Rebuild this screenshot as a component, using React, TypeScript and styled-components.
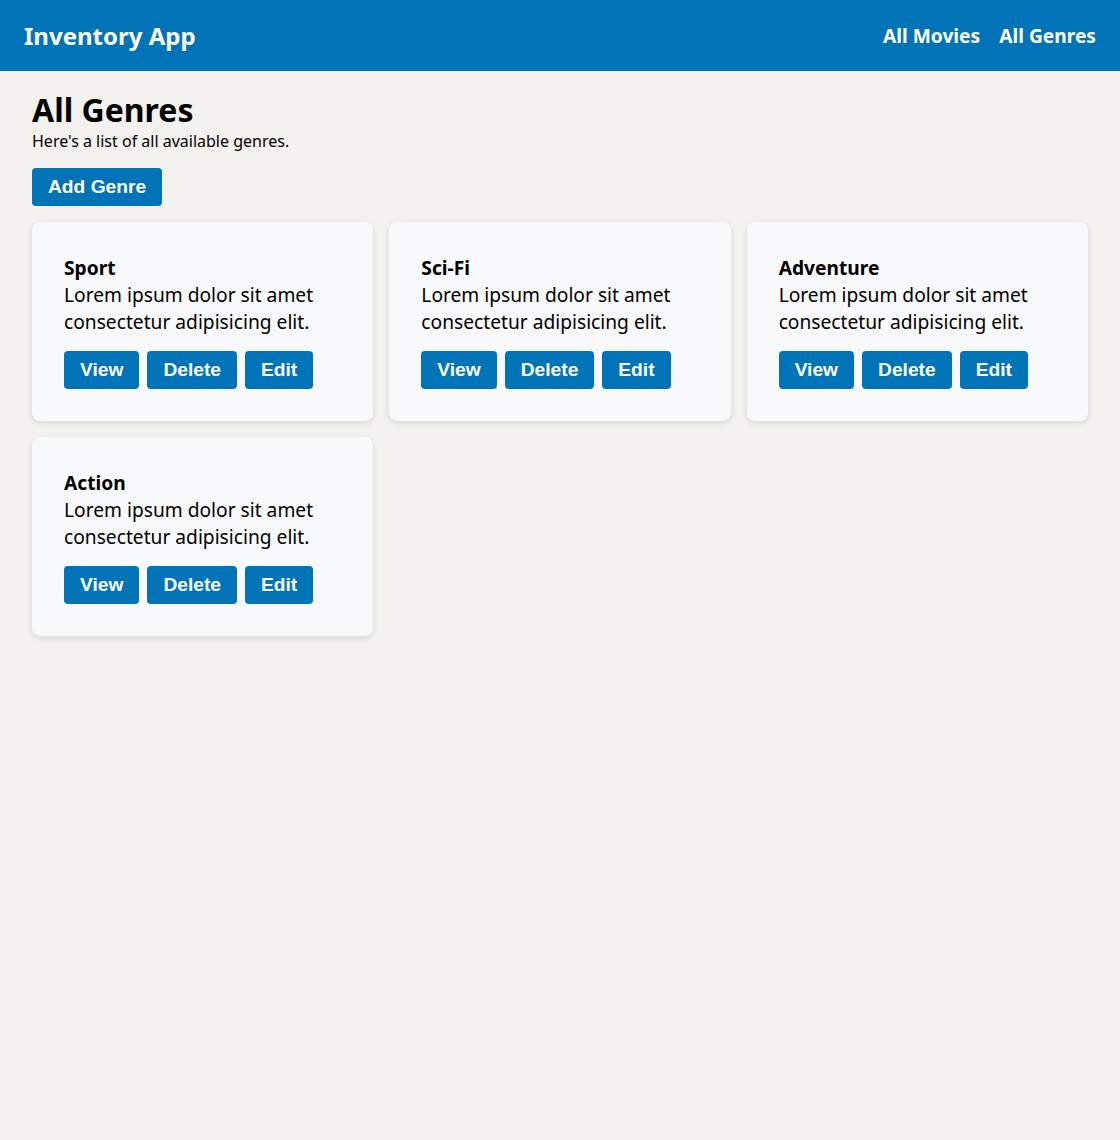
import styled, { createGlobalStyle } from 'styled-components'

const GlobalStyle = createGlobalStyle`
  html, body {
    margin: 0;
    padding: 0;
    background-color: #f4f2ef;
    font-family: "Noto Sans", sans-serif;
    color: #000000;
  }
  * {
    box-sizing: border-box;
  }
`

const Header = styled.header`
  height: 71px;
  padding: 0 24px;
  background-color: #0074b7;
  color: #ffffff;
  display: flex;
  align-items: center;
  justify-content: space-between;
`

const Brand = styled.h2`
  margin: 0;
  font-size: 24px;
  font-weight: 700;
`

const Nav = styled.nav`
  display: flex;
  gap: 19px;

  & a {
    color: #ffffff;
    text-decoration: none;
    font-size: 19.2px;
    font-weight: 700;
  }
`

const Main = styled.main`
  padding: 20px 32px 32px;
`

const Title = styled.h1`
  margin: 0;
  font-size: 32px;
  line-height: 38px;
  font-weight: 700;
`

const Subtitle = styled.p`
  margin: 0 0 15px;
  font-size: 16px;
  line-height: 24px;
`

const Button = styled.button`
  height: 38px;
  padding: 0 16px;
  border: none;
  border-radius: 4px;
  background-color: #0074b7;
  color: #ffffff;
  font-family: "Liberation Sans", Arial, sans-serif;
  font-size: 19.2px;
  font-weight: 700;
  cursor: pointer;
`

const Grid = styled.div`
  margin-top: 16px;
  display: grid;
  grid-template-columns: repeat(3, 1fr);
  gap: 16px;
`

const Card = styled.div`
  background-color: #f8f9fa;
  border-radius: 8px;
  padding: 32px;
  box-shadow: 0 2px 6px rgba(0, 0, 0, 0.12);
`

const CardTitle = styled.h3`
  margin: 0;
  font-size: 19.2px;
  line-height: 27px;
  font-weight: 700;
`

const CardText = styled.p`
  margin: 0 0 16px;
  font-size: 19.2px;
  line-height: 27px;
`

const Actions = styled.div`
  display: flex;
  gap: 8px;
`

const genres = ['Sport', 'Sci-Fi', 'Adventure', 'Action']

export default function App() {
  return (
    <>
      <GlobalStyle />
      <Header>
        <Brand>Inventory App</Brand>
        <Nav>
          <a href="#">All Movies</a>
          <a href="#">All Genres</a>
        </Nav>
      </Header>
      <Main>
        <Title>All Genres</Title>
        <Subtitle>Here's a list of all available genres.</Subtitle>
        <Button>Add Genre</Button>
        <Grid>
          {genres.map((genre) => (
            <Card key={genre}>
              <CardTitle>{genre}</CardTitle>
              <CardText>Lorem ipsum dolor sit amet consectetur adipisicing elit.</CardText>
              <Actions>
                <Button>View</Button>
                <Button>Delete</Button>
                <Button>Edit</Button>
              </Actions>
            </Card>
          ))}
        </Grid>
      </Main>
    </>
  )
}
